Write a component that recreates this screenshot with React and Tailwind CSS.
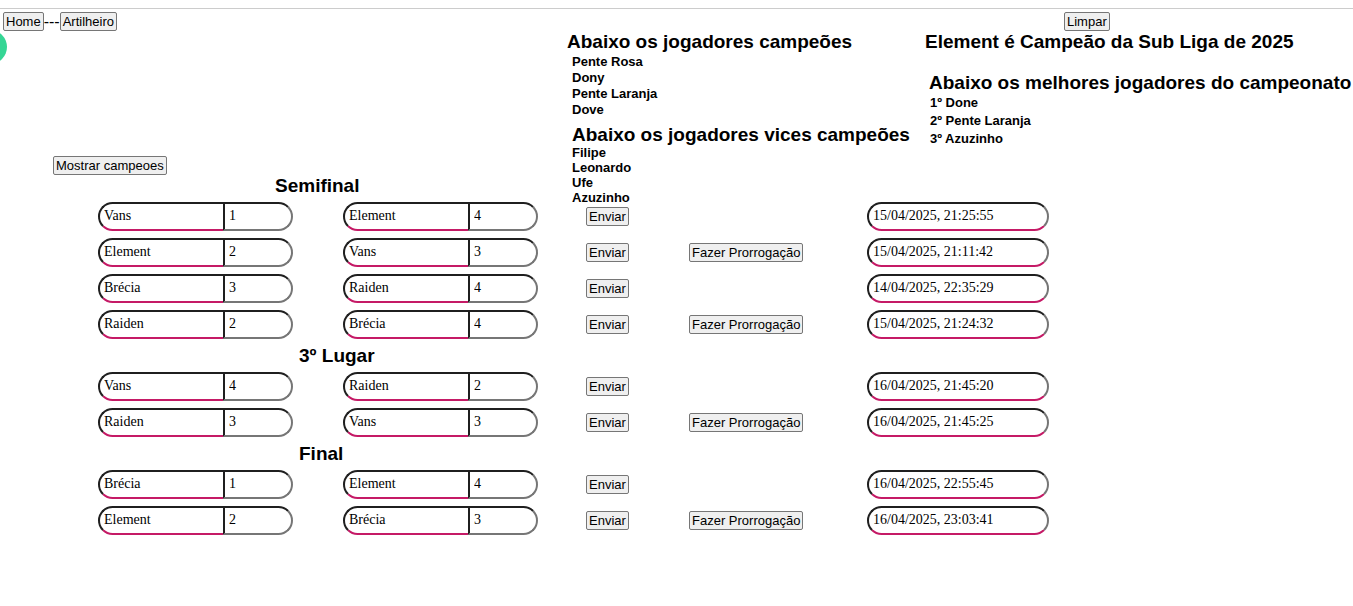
import React from "react";

const stages = [
  {
    title: "Semifinal",
    matches: [
      { home: "Vans", homeGoals: 1, away: "Element", awayGoals: 4, date: "15/04/2025, 21:25:55" },
      { home: "Element", homeGoals: 2, away: "Vans", awayGoals: 3, date: "15/04/2025, 21:11:42", extra: true },
      { home: "Brécia", homeGoals: 3, away: "Raiden", awayGoals: 4, date: "14/04/2025, 22:35:29" },
      { home: "Raiden", homeGoals: 2, away: "Brécia", awayGoals: 4, date: "15/04/2025, 21:24:32", extra: true },
    ],
  },
  {
    title: "3º Lugar",
    matches: [
      { home: "Vans", homeGoals: 4, away: "Raiden", awayGoals: 2, date: "16/04/2025, 21:45:20" },
      { home: "Raiden", homeGoals: 3, away: "Vans", awayGoals: 3, date: "16/04/2025, 21:45:25", extra: true },
    ],
  },
  {
    title: "Final",
    matches: [
      { home: "Brécia", homeGoals: 1, away: "Element", awayGoals: 4, date: "16/04/2025, 22:55:45" },
      { home: "Element", homeGoals: 2, away: "Brécia", awayGoals: 3, date: "16/04/2025, 23:03:41", extra: true },
    ],
  },
];

const champions = ["Pente Rosa", "Dony", "Pente Laranja", "Dove"];
const runnersUp = ["Filipe", "Leonardo", "Ufe", "Azuzinho"];
const bestPlayers = ["1º Done", "2º Pente Laranja", "3º Azuzinho"];

function Button({ children }) {
  return (
    <button
      type="button"
      className="h-[19px] rounded-[2px] border border-[#767676] bg-[#efefef] px-[2px] text-[13px] leading-[17px] whitespace-nowrap text-black"
    >
      {children}
    </button>
  );
}

function Heading({ children }) {
  return <h3 className="text-[19px] leading-5 font-bold whitespace-nowrap">{children}</h3>;
}

function Team({ name, goals, label }) {
  return (
    <div className="flex h-[29px]">
      <input
        aria-label={label}
        defaultValue={name}
        className="w-[125px] rounded-l-[15px] border-2 border-r-0 border-[#1f1f1f] border-b-[#c51a66] bg-white pb-px pl-1 font-['Liberation_Serif',serif] text-[14px] leading-5 outline-none"
      />
      <input
        aria-label={`Gols ${label}`}
        defaultValue={goals}
        className="w-[70px] rounded-r-[15px] border-2 border-[#1f1f1f] border-r-[#767676] border-b-[#767676] bg-white pb-px pl-1 font-['Liberation_Serif',serif] text-[14px] leading-5 outline-none"
      />
    </div>
  );
}

function Match({ match }) {
  return (
    <div className="grid grid-cols-[245px_243px_103px_178px_182px] items-center pl-[98px]">
      <Team name={match.home} goals={match.homeGoals} label="Mandante" />
      <Team name={match.away} goals={match.awayGoals} label="Visitante" />
      <div className="flex">
        <Button>Enviar</Button>
      </div>
      <div className="flex">{match.extra && <Button>Fazer Prorrogação</Button>}</div>
      <input
        aria-label="Data"
        defaultValue={match.date}
        className="h-[29px] w-full rounded-[15px] border-2 border-[#1f1f1f] border-r-[#767676] border-b-[#c51a66] bg-white pb-px pl-1 font-['Liberation_Serif',serif] text-[14px] leading-5 outline-none"
      />
    </div>
  );
}

function StageTitle({ children, indent }) {
  return (
    <div className={`flex h-[33px] items-center ${indent}`}>
      <Heading>{children}</Heading>
    </div>
  );
}

export default function App() {
  return (
    <div className="relative overflow-hidden bg-white pt-2 font-['Liberation_Sans',Arial,sans-serif] text-black">
      <span className="absolute top-[30px] left-[-27px] size-[34px] rounded-full bg-[#35d695]" />
      <header className="grid grid-cols-[564px_358px_1fr] border-t border-[#cccccc] pt-[3px] pl-[3px]">
        <div className="flex flex-col justify-between">
          <nav className="flex items-center text-[16px] leading-[19px]">
            <Button>Home</Button>
            <span>---</span>
            <Button>Artilheiro</Button>
          </nav>
          <div>
            <div className="flex h-[13px] items-start pl-[50px]">
              <Button>Mostrar campeoes</Button>
            </div>
            <StageTitle indent="pl-[272px]">{stages[0].title}</StageTitle>
          </div>
        </div>

        <div className="-mb-[3px] pt-5">
          <Heading>Abaixo os jogadores campeões</Heading>
          <ul className="pt-[2px] pl-[5px] text-[13px] leading-4 font-bold">
            {champions.map((name) => (
              <li key={name}>{name}</li>
            ))}
          </ul>
          <div className="pt-[7px] pl-[5px]">
            <Heading>Abaixo os jogadores vices campeões</Heading>
            <ul className="text-[13px] leading-[15px] font-bold">
              {runnersUp.map((name) => (
                <li key={name}>{name}</li>
              ))}
            </ul>
          </div>
        </div>

        <div>
          <div className="flex pb-px pl-[139px]">
            <Button>Limpar</Button>
          </div>
          <Heading>Element é Campeão da Sub Liga de 2025</Heading>
          <div className="pt-[21px] pl-1">
            <Heading>Abaixo os melhores jogadores do campeonato</Heading>
            <ul className="flex flex-col pt-px pl-px text-[13px] leading-[18px] font-bold">
              {bestPlayers.map((name) => (
                <li key={name}>{name}</li>
              ))}
            </ul>
          </div>
        </div>
      </header>

      <main>
        {stages.map((stage, index) => (
          <section key={stage.title}>
            {index > 0 && <StageTitle indent="pl-[299px]">{stage.title}</StageTitle>}
            <div className="flex flex-col gap-[7px]">
              {stage.matches.map((match) => (
                <Match key={match.date} match={match} />
              ))}
            </div>
          </section>
        ))}
      </main>
    </div>
  );
}
